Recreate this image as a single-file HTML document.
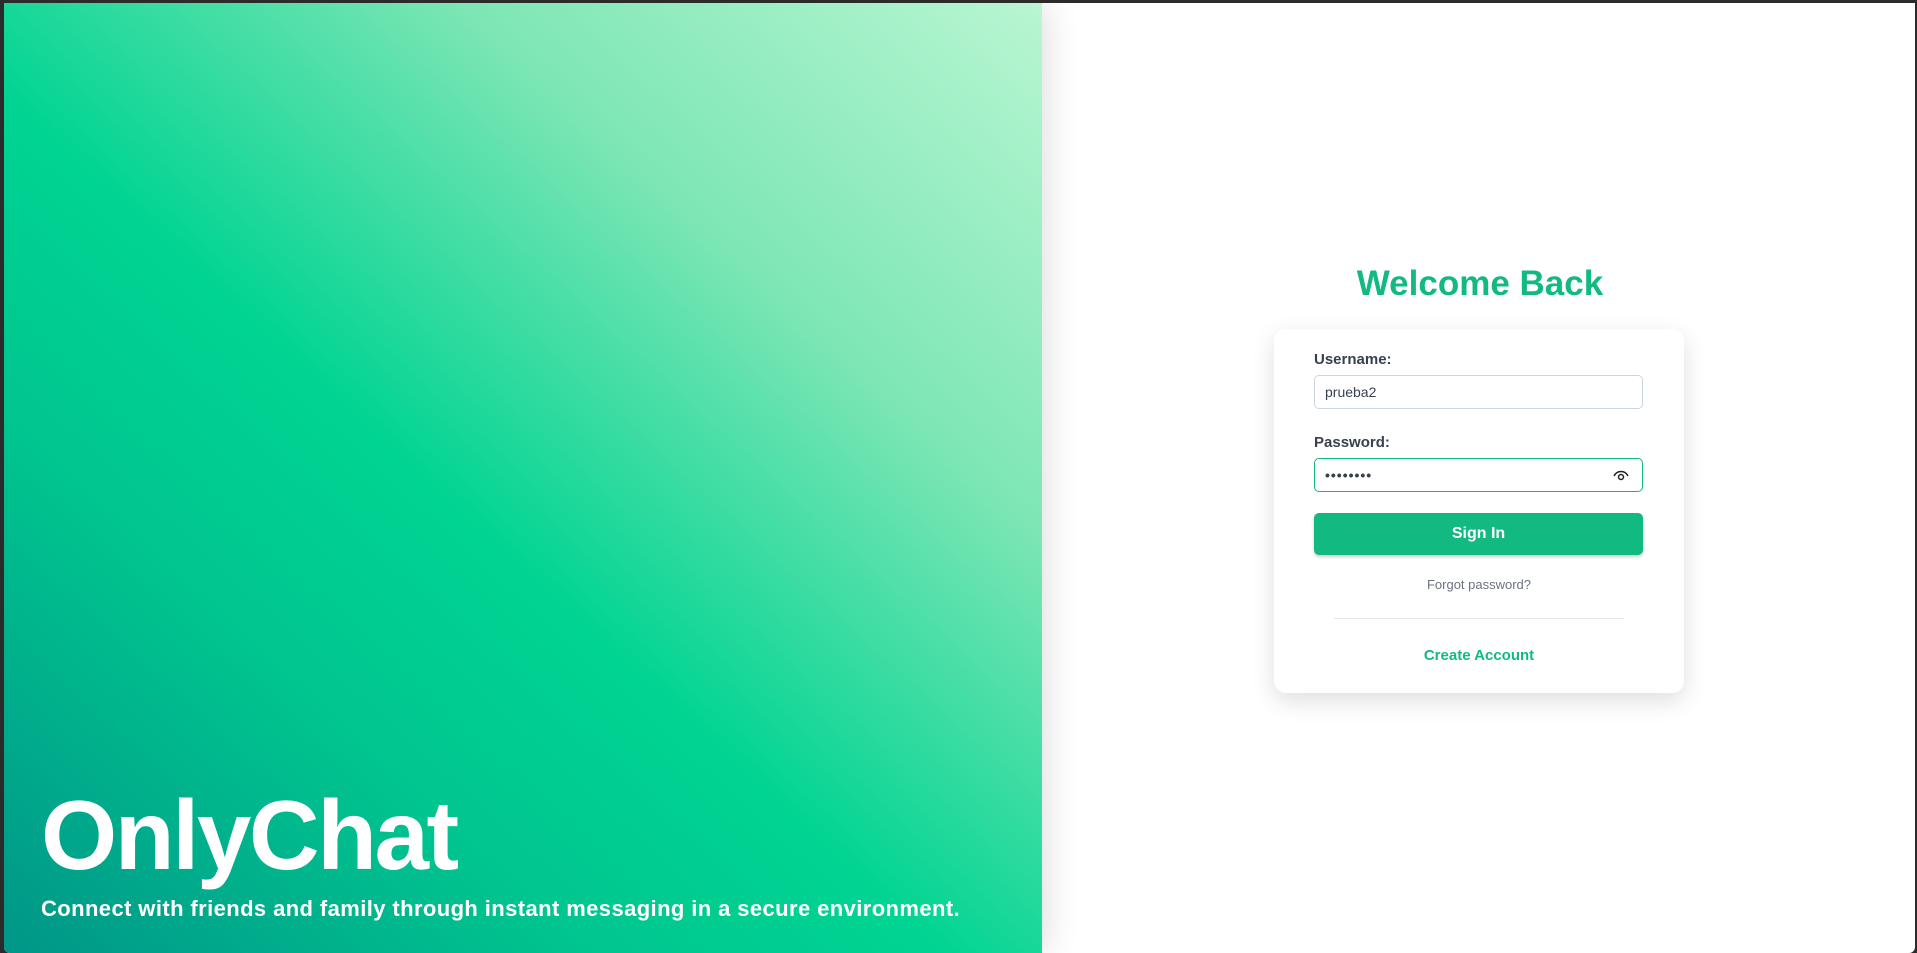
<!DOCTYPE html>
<html><head><meta charset="utf-8"><style>
html,body{margin:0;padding:0;width:1917px;height:953px;overflow:hidden;background:#2b2b2b;font-family:"Liberation Sans",sans-serif}
.frame{position:absolute;left:4px;top:3px;right:2px;bottom:0;background:#fff;border-radius:0 0 6px 6px;overflow:hidden}
.left{position:absolute;left:0;top:0;width:1038px;height:100%;background:linear-gradient(to top right,#009688 0%,#00c58f 28%,#00d492 45%,#7de6b5 72%,#b8f6d2 100%);box-shadow:6px 0 30px rgba(0,0,0,.12)}
.brand{position:absolute;left:37px;top:776px;color:#fff;font-weight:bold;font-size:98px;letter-spacing:-2.5px}
.sub{position:absolute;left:37px;top:893px;color:#fff;font-weight:bold;font-size:22px;letter-spacing:0.4px}
h1{position:absolute;left:1120px;width:720px;top:264px;margin:0;text-align:center;color:#12b981;font-size:35px;font-weight:bold}
.card{position:absolute;left:1274px;top:329px;width:410px;height:364px;background:#fff;border-radius:12px;box-shadow:0 8px 24px rgba(0,0,0,.13)}
.lbl{position:absolute;left:40px;font-size:15px;font-weight:bold;color:#374151}
.inp{position:absolute;left:40px;border:1px solid #cbd5e1;border-radius:5px;font-size:14px;color:#374151;line-height:32px;padding-left:10px;box-sizing:border-box;width:329px;height:34px}
.btn{position:absolute;left:40px;top:184px;width:329px;height:42px;background:#12b981;border-radius:5px;color:#fff;font-weight:bold;font-size:16px;text-align:center;line-height:42px;box-shadow:0 2px 3px rgba(0,0,0,.2)}
.c{position:absolute;left:0;width:100%;text-align:center}
</style></head><body>
<div class="frame">
<div class="left"></div>
<div class="brand">OnlyChat</div>
<div class="sub">Connect with friends and family through instant messaging in a secure environment.</div>
</div>
<h1>Welcome Back</h1>
<div class="card">
<div class="lbl" style="top:22px">Username:</div>
<div class="inp" style="top:46px">prueba2</div>
<div class="lbl" style="top:105px">Password:</div>
<div class="inp" style="top:129px;border-color:#12b981;font-weight:bold;letter-spacing:1px">••••••••
<svg style="position:absolute;right:12px;top:9px" width="18" height="14" viewBox="0 0 18 14" fill="none" stroke="#222" stroke-width="1.5"><path d="M2 8 C5 2 13 2 16 8"/><circle cx="9" cy="9" r="2.5"/></svg></div>
<div class="btn">Sign In</div>
<div class="c" style="top:248px;font-size:13px;color:#6b7280">Forgot password?</div>
<div style="position:absolute;left:60px;width:290px;top:289px;border-top:1px solid #e5e7eb"></div>
<div class="c" style="top:318px;font-size:15px;color:#12b981;font-weight:bold">Create Account</div>
</div>
</body></html>
